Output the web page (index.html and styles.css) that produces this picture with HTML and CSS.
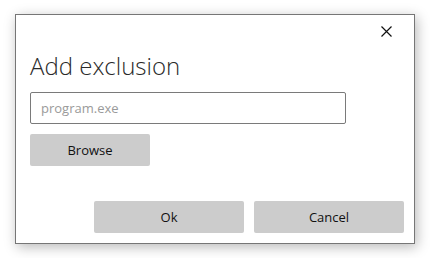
FILE: index.html
```html
<!DOCTYPE html>
<html lang="en">
<head>
    <meta charset="UTF-8">
    <title>Add exclusion</title>
    <link rel="stylesheet" href="styles.css">
</head>
<body>
    <div class="dialog">
        <div class="dialog-top">
            <button class="close" type="button" aria-label="Close">
                <svg width="11" height="11" viewBox="0 0 11 11">
                    <path d="M0.5 0.5 L10.5 10.5 M10.5 0.5 L0.5 10.5" stroke="#111" stroke-width="1.2" fill="none"/>
                </svg>
            </button>
        </div>
        <h1>Add exclusion</h1>
        <input type="text" class="path-input" placeholder="program.exe">
        <button class="btn browse" type="button">Browse</button>
        <div class="actions">
            <button class="btn" type="button">Ok</button>
            <button class="btn" type="button">Cancel</button>
        </div>
    </div>
</body>
</html>
```

FILE: styles.css
```css
body {
    margin: 0;
    padding: 14px 15px;
    background-color: #fff;
    font-family: "Open Sans", "Noto Sans", sans-serif;
}
.dialog {
    box-sizing: border-box;
    width: 400px;
    height: 230px;
    border: 1px solid #767676;
    background-color: #fff;
    box-shadow: 2px 3px 12px rgba(0, 0, 0, 0.28);
    padding: 0 10px 10px 14px;
    display: flex;
    flex-direction: column;
    align-items: flex-start;
}
.dialog-top {
    align-self: stretch;
    display: flex;
    justify-content: flex-end;
    padding-top: 5px;
    height: 22px;
}
.close {
    width: 22px;
    height: 22px;
    padding: 0;
    border: none;
    background: none;
    display: flex;
    align-items: center;
    justify-content: center;
    margin-right: 7px;
}
h1 {
    margin: 8px 0 0 0;
    font-size: 24px;
    font-weight: 300;
    line-height: 32px;
    color: #2a2a2a;
}
.path-input {
    box-sizing: border-box;
    width: 316px;
    height: 32px;
    margin-top: 10px;
    padding: 0 10px;
    border: 1px solid #7a7a7a;
    border-radius: 2px;
    font-family: inherit;
    font-size: 13px;
}
.path-input::placeholder {
    color: #9a9a9a;
}
.btn {
    box-sizing: border-box;
    height: 32px;
    border: none;
    border-radius: 2px;
    background-color: #cccccc;
    color: #111;
    font-family: inherit;
    font-size: 13px;
    padding: 0;
}
.browse {
    width: 120px;
    margin-top: 10px;
}
.actions {
    align-self: stretch;
    margin-top: auto;
    display: flex;
    justify-content: flex-end;
    gap: 10px;
}
.actions .btn {
    width: 150px;
}
```
